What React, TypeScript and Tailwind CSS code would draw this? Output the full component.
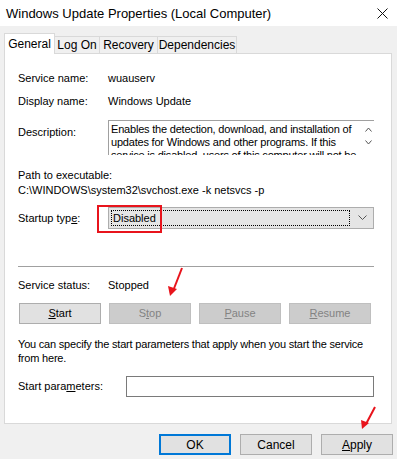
import React from "react";

const body = { fontFamily: '"Liberation Sans", Arial, sans-serif' };

function Btn({ children, disabled, w = "w-[82px]" }: { children: React.ReactNode; disabled?: boolean; w?: string }) {
  return (
    <div
      className={`${w} h-[21px] flex items-center justify-center border text-[11px] ${
        disabled ? "bg-[#cccccc] border-[#bfbfbf] text-[#838383]" : "bg-[#e1e1e1] border-[#adadad] text-black"
      }`}
    >
      {children}
    </div>
  );
}

export default function App() {
  return (
    <div className="w-[397px] h-[459px] bg-[#f0f0f0] relative overflow-hidden text-black" style={body}>
      {/* Title bar */}
      <div className="h-[26px] bg-white flex items-center justify-between pl-[6px] pr-[4px]">
        <span className="text-[13px] leading-none">Windows Update Properties (Local Computer)</span>
        <svg width="11" height="11" viewBox="0 0 11 11" className="mr-[5px]">
          <path d="M0.5 0.5 L10.5 10.5 M10.5 0.5 L0.5 10.5" stroke="#111" strokeWidth="1" />
        </svg>
      </div>

      {/* Tabs */}
      <div className="flex items-end h-[20px] mt-[7px] ml-[4px] text-[12px] relative z-10">
        <div className="w-[51px] h-[21px] -mb-[1px] bg-white border border-[#d9d9d9] border-b-0 flex items-center justify-center pb-[1px]">
          General
        </div>
        <div className="w-[45px] h-[17px] border border-l-0 border-b-0 border-[#d9d9d9] flex items-center justify-center">
          Log On
        </div>
        <div className="w-[58px] h-[17px] border border-l-0 border-b-0 border-[#d9d9d9] flex items-center justify-center">
          Recovery
        </div>
        <div className="w-[79px] h-[17px] border border-l-0 border-b-0 border-[#d9d9d9] flex items-center justify-center">
          Dependencies
        </div>
      </div>

      {/* Panel */}
      <div className="ml-[4px] mr-[5px] h-[371px] bg-white border border-[#d9d9d9] pl-[13px] pr-[17px] flex flex-col text-[11px] leading-[13px]">
        <div className="flex mt-[18px]">
          <div className="w-[90px]">Service name:</div>
          <div>wuauserv</div>
        </div>
        <div className="flex mt-[10px]">
          <div className="w-[90px]">Display name:</div>
          <div>Windows Update</div>
        </div>
        <div className="flex mt-[12px]">
          <div className="w-[90px] mt-[6px]">Description:</div>
          <div className="flex-1 h-[35px] border-t border-l border-[#a0a0a0] flex overflow-hidden">
            <div className="flex-1 pl-[2px] pt-[2px] whitespace-nowrap tracking-[-0.2px] overflow-hidden">
              <div>Enables the detection, download, and installation of</div>
              <div>updates for Windows and other programs. If this</div>
              <div>service is disabled, users of this computer will not be</div>
            </div>
            <div className="w-[12px] flex flex-col items-center pt-[6px] gap-[8px]">
              <svg width="7" height="5" viewBox="0 0 7 5">
                <path d="M0.5 4.5 L3.5 1 L6.5 4.5" stroke="#555" fill="none" />
              </svg>
              <svg width="7" height="5" viewBox="0 0 7 5">
                <path d="M0.5 0.5 L3.5 4 L6.5 0.5" stroke="#555" fill="none" />
              </svg>
            </div>
          </div>
        </div>
        <div className="mt-[14px]">Path to executable:</div>
        <div className="mt-[2px]">C:\WINDOWS\system32\svchost.exe -k netsvcs -p</div>
        <div className="flex items-center mt-[10px]">
          <div className="w-[90px]">
            Startup typ<span className="underline">e</span>:
          </div>
          <div className="flex-1 h-[22px] bg-[#e5e5e5] border border-[#adadad] flex items-center pl-[2px] pr-[6px] relative">
            <div className="flex-1 h-[16px] border border-dotted border-black flex items-center pl-[1px]">
              Disabled
            </div>
            <svg width="9" height="6" viewBox="0 0 9 6" className="ml-[8px]">
              <path d="M0.5 0.5 L4.5 4.5 L8.5 0.5" stroke="#555" fill="none" />
            </svg>
            <div className="absolute left-[-12px] top-[-3px] w-[65px] h-[28px] border-2 border-[#e8141c]" />
          </div>
        </div>
        <div className="mt-[37px] h-px bg-[#a0a0a0]" />
        <div className="flex mt-[12px]">
          <div className="w-[90px]">Service status:</div>
          <div>Stopped</div>
        </div>
        <div className="flex gap-[8px] mt-[11px] ml-[1px]">
          <Btn>
            <span className="underline">S</span>tart
          </Btn>
          <Btn disabled>
            S<span className="underline">t</span>op
          </Btn>
          <Btn disabled>
            <span className="underline">P</span>ause
          </Btn>
          <Btn disabled>
            <span className="underline">R</span>esume
          </Btn>
        </div>
        <div className="mt-[13px] leading-[14px] whitespace-nowrap tracking-[-0.2px]">
          <div>You can specify the start parameters that apply when you start the service</div>
          <div>from here.</div>
        </div>
        <div className="flex items-center mt-[11px]">
          <div className="w-[108px]">
            Start para<span className="underline">m</span>eters:
          </div>
          <div className="flex-1 h-[21px] border border-[#7a7a7a] bg-white" />
        </div>
      </div>

      {/* Bottom buttons */}
      <div className="flex justify-end gap-[9px] mt-[10px] mr-[4px] text-[12px]">
        <div className="w-[72px] h-[21px] bg-[#e1e1e1] border-2 border-[#0078d7] flex items-center justify-center">OK</div>
        <div className="w-[72px] h-[21px] bg-[#e1e1e1] border border-[#adadad] flex items-center justify-center">Cancel</div>
        <div className="w-[72px] h-[21px] bg-[#e1e1e1] border border-[#adadad] flex items-center justify-center">
          <span className="underline">A</span>pply
        </div>
      </div>

      {/* Red arrow annotations */}
      <svg className="absolute left-[164px] top-[266px]" width="22" height="32" viewBox="0 0 22 32">
        <path d="M18 2 L9 25" stroke="#e8141c" strokeWidth="2" fill="none" />
        <path d="M6 30 L4 20 L13 23 Z" fill="#e8141c" />
      </svg>
      <svg className="absolute left-[357px] top-[405px]" width="22" height="26" viewBox="0 0 22 26">
        <path d="M18 2 L9 19" stroke="#e8141c" strokeWidth="2" fill="none" />
        <path d="M5 24 L4 15 L12 18 Z" fill="#e8141c" />
      </svg>
    </div>
  );
}
